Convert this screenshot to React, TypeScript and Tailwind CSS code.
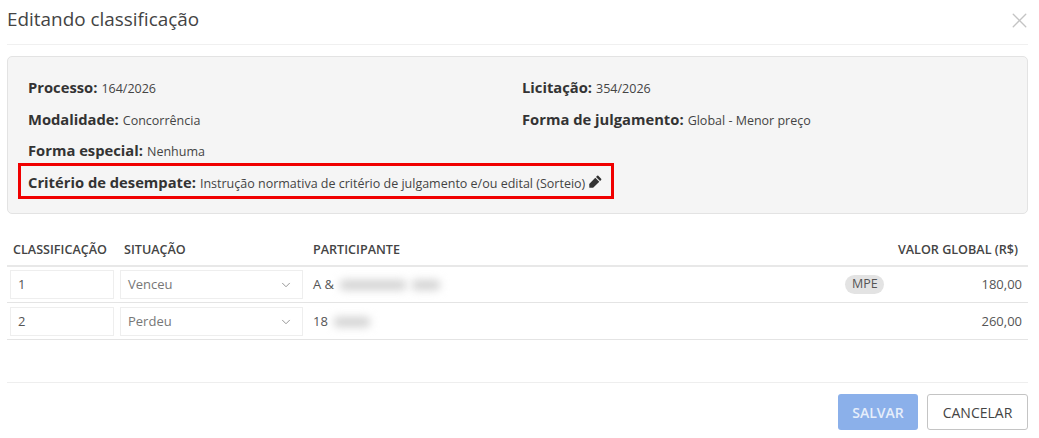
import React from "react";
import { ChevronDown, X } from "lucide-react";

const Info = ({ label, value, big }: { label: string; value: string; big?: boolean }) => (
  <p className="h-[31.5px] flex items-baseline whitespace-pre pt-[5px]">
    <b className="text-[14.75px] font-bold text-[#333]">{label}:</b>
    <span className="text-[12.5px] text-[#444] ml-[4px]">{value}</span>
    {big && (
      <svg className="ml-[4px] w-[13px] h-[13px] self-center -mt-[5px]" viewBox="0 0 24 24" fill="#333">
        <path d="M17.2 1.6 22.4 6.8a1.6 1.6 0 0 1 0 2.2l-2 2-7.4-7.4 2-2a1.6 1.6 0 0 1 2.2 0ZM11.6 5 19 12.4 7.6 23.6 0.6 23.4 0.4 16.4Z" />
      </svg>
    )}
  </p>
);

const Row = ({ pos, sit, prefix, blurs, mpe, valor }: { pos: string; sit: string; prefix: string; blurs: number[]; mpe?: boolean; valor: string }) => (
  <div className="h-[37px] border-b border-[#e4e4e4] flex items-center pl-[3px] pt-[1px] text-[13px] text-[#555]">
    <div className="w-[104px] h-[29px] border border-[#eeeeee] flex items-center pl-[7px] shrink-0">{pos}</div>
    <div className="w-[183px] h-[29px] ml-[6px] border border-[#eeeeee] flex items-center justify-between pl-[7px] pr-[9px] shrink-0 text-[#777]">
      {sit}
      <ChevronDown size={14} strokeWidth={1.5} className="text-[#888]" />
    </div>
    <div className="ml-[10px] flex items-center flex-1">
      <span>{prefix}</span>
      <div className="ml-[6px] flex items-center gap-[6px]">
        {blurs.map((w, i) => (
          <div key={i} className="h-[10px] bg-[#d2d2d2] rounded-sm blur-[4px]" style={{ width: w }} />
        ))}
      </div>
    </div>
    {mpe && (
      <span className="mr-[97px] w-[39px] h-[19px] rounded-full bg-[#e3e3e3] flex items-center justify-center text-[12.5px] text-[#555]">MPE</span>
    )}
    <span className="pr-[6px]">{valor}</span>
  </div>
);

export default function App() {
  return (
    <div className="relative w-[1039px] h-[438px] bg-white overflow-hidden" style={{ fontFamily: '"Open Sans", sans-serif' }}>
      <div className="ml-[7px] w-[1021px]">
        <div className="h-[45px] border-b border-[#f0f0f0] flex items-center justify-between">
          <h1 className="text-[18.9px] text-[#444] -mt-[5px]">Editando classificação</h1>
          <X size={25} strokeWidth={1.3} className="text-[#c4c4c4] -mt-[3px] -mr-[4px]" />
        </div>

        <div className="mt-[11px] h-[158px] bg-[#f5f5f5] border border-[#e3e3e3] rounded-[5px] pl-[20px] pt-[14px]">
          <div className="grid grid-cols-[494px_1fr]">
            <Info label="Processo" value="164/2026" />
            <Info label="Licitação" value="354/2026" />
            <Info label="Modalidade" value="Concorrência" />
            <Info label="Forma de julgamento" value="Global - Menor preço" />
          </div>
          <Info label="Forma especial" value="Nenhuma" />
          <Info label="Critério de desempate" value="Instrução normativa de critério de julgamento e/ou edital (Sorteio)" big />
        </div>

        <div className="mt-[22px]">
          <div className="h-[31px] border-b-2 border-[#e8e8e8] flex items-center text-[12.6px] font-semibold text-[#444]">
            <span className="w-[117px] pl-[6px]">CLASSIFICAÇÃO</span>
            <span className="w-[189px]">SITUAÇÃO</span>
            <span className="flex-1">PARTICIPANTE</span>
            <span className="pr-[10px]">VALOR GLOBAL (R$)</span>
          </div>
          <div className="-mt-px">
            <Row pos="1" sit="Venceu" prefix="A &" blurs={[66, 28]} mpe valor="180,00" />
            <Row pos="2" sit="Perdeu" prefix="18" blurs={[36]} valor="260,00" />
          </div>
        </div>

        <div className="mt-[42px] border-t border-[#eeeeee] pt-[11px] flex justify-end gap-[9px]">
          <button className="w-[80px] h-[36px] rounded-[3px] bg-[#8bb0ea] text-[#e6eefb] text-[14px] font-semibold">SALVAR</button>
          <button className="w-[101px] h-[36px] rounded-[3px] border border-[#c4c4c4] bg-white text-[#444] text-[14px]">CANCELAR</button>
        </div>
      </div>

      {/* destaque vermelho */}
      <div className="absolute left-[18px] top-[163px] w-[596px] h-[36px] border-[3px] border-[#f00000]" />
    </div>
  );
}
